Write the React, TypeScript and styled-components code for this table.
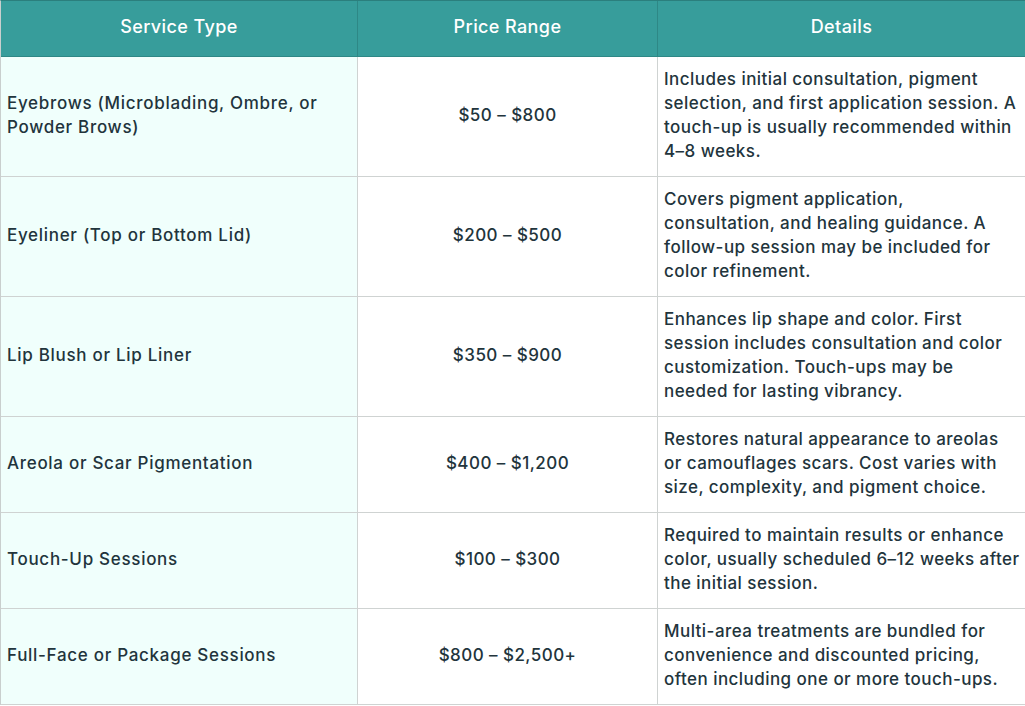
import React from 'react';
import styled, { createGlobalStyle } from 'styled-components';

const GlobalStyle = createGlobalStyle`
  html, body {
    margin: 0;
    padding: 0;
    background: #ffffff;
  }
  body {
    font-family: Inter, 'Liberation Sans', sans-serif;
    color: #22343c;
  }
`;

const Table = styled.table`
  width: 1024px;
  border-collapse: separate;
  border-spacing: 0;
  table-layout: fixed;
  border-top: 1px solid #2b7f7d;
  border-left: 1px solid #c9cfce;
  border-right: 1px solid #c9cfce;
`;

const HeadCell = styled.th<{ $width: number; $last?: boolean }>`
  width: ${p => p.$width}px;
  height: 51px;
  padding: 0 0 4px;
  background: #379d9b;
  color: #ffffff;
  font-size: 18px;
  font-weight: 500;
  letter-spacing: 0.4px;
  text-align: center;
  vertical-align: middle;
  border-right: ${p => (p.$last ? 'none' : '1px solid #2e8886')};
  border-bottom: 1px solid #2e8886;
`;

const Cell = styled.td<{ $kind: 'service' | 'price' | 'details' }>`
  padding: 10px 6px 13px;
  font-size: 17px;
  font-weight: 500;
  letter-spacing: ${p => (p.$kind === 'service' ? '0.7px' : '0.45px')};
  line-height: 24px;
  vertical-align: middle;
  text-align: ${p => (p.$kind === 'price' ? 'center' : 'left')};
  background: ${p => (p.$kind === 'service' ? '#f0fffc' : '#ffffff')};
  border-right: ${p => (p.$kind === 'details' ? 'none' : '1px solid #cfd3d2')};
  border-bottom: 1px solid #cfd3d2;
`;

const Line = styled.span`
  display: block;
  white-space: nowrap;
`;

type Row = {
  service: string[];
  price: string;
  details: string[];
};

const rows: Row[] = [
  {
    service: ['Eyebrows (Microblading, Ombre, or', 'Powder Brows)'],
    price: '$50 – $800',
    details: [
      'Includes initial consultation, pigment',
      'selection, and first application session. A',
      'touch-up is usually recommended within',
      '4–8 weeks.',
    ],
  },
  {
    service: ['Eyeliner (Top or Bottom Lid)'],
    price: '$200 – $500',
    details: [
      'Covers pigment application,',
      'consultation, and healing guidance. A',
      'follow-up session may be included for',
      'color refinement.',
    ],
  },
  {
    service: ['Lip Blush or Lip Liner'],
    price: '$350 – $900',
    details: [
      'Enhances lip shape and color. First',
      'session includes consultation and color',
      'customization. Touch-ups may be',
      'needed for lasting vibrancy.',
    ],
  },
  {
    service: ['Areola or Scar Pigmentation'],
    price: '$400 – $1,200',
    details: [
      'Restores natural appearance to areolas',
      'or camouflages scars. Cost varies with',
      'size, complexity, and pigment choice.',
    ],
  },
  {
    service: ['Touch-Up Sessions'],
    price: '$100 – $300',
    details: [
      'Required to maintain results or enhance',
      'color, usually scheduled 6–12 weeks after',
      'the initial session.',
    ],
  },
  {
    service: ['Full-Face or Package Sessions'],
    price: '$800 – $2,500+',
    details: [
      'Multi-area treatments are bundled for',
      'convenience and discounted pricing,',
      'often including one or more touch-ups.',
    ],
  },
];

const App: React.FC = () => {
  return (
    <>
      <GlobalStyle />
      <Table>
        <thead>
          <tr>
            <HeadCell $width={356}>Service Type</HeadCell>
            <HeadCell $width={299}>Price Range</HeadCell>
            <HeadCell $width={367} $last>Details</HeadCell>
          </tr>
        </thead>
        <tbody>
          {rows.map(row => (
            <tr key={row.price}>
              <Cell $kind="service">
                {row.service.map(l => <Line key={l}>{l}</Line>)}
              </Cell>
              <Cell $kind="price">{row.price}</Cell>
              <Cell $kind="details">
                {row.details.map(l => <Line key={l}>{l}</Line>)}
              </Cell>
            </tr>
          ))}
        </tbody>
      </Table>
    </>
  );
};

export default App;
